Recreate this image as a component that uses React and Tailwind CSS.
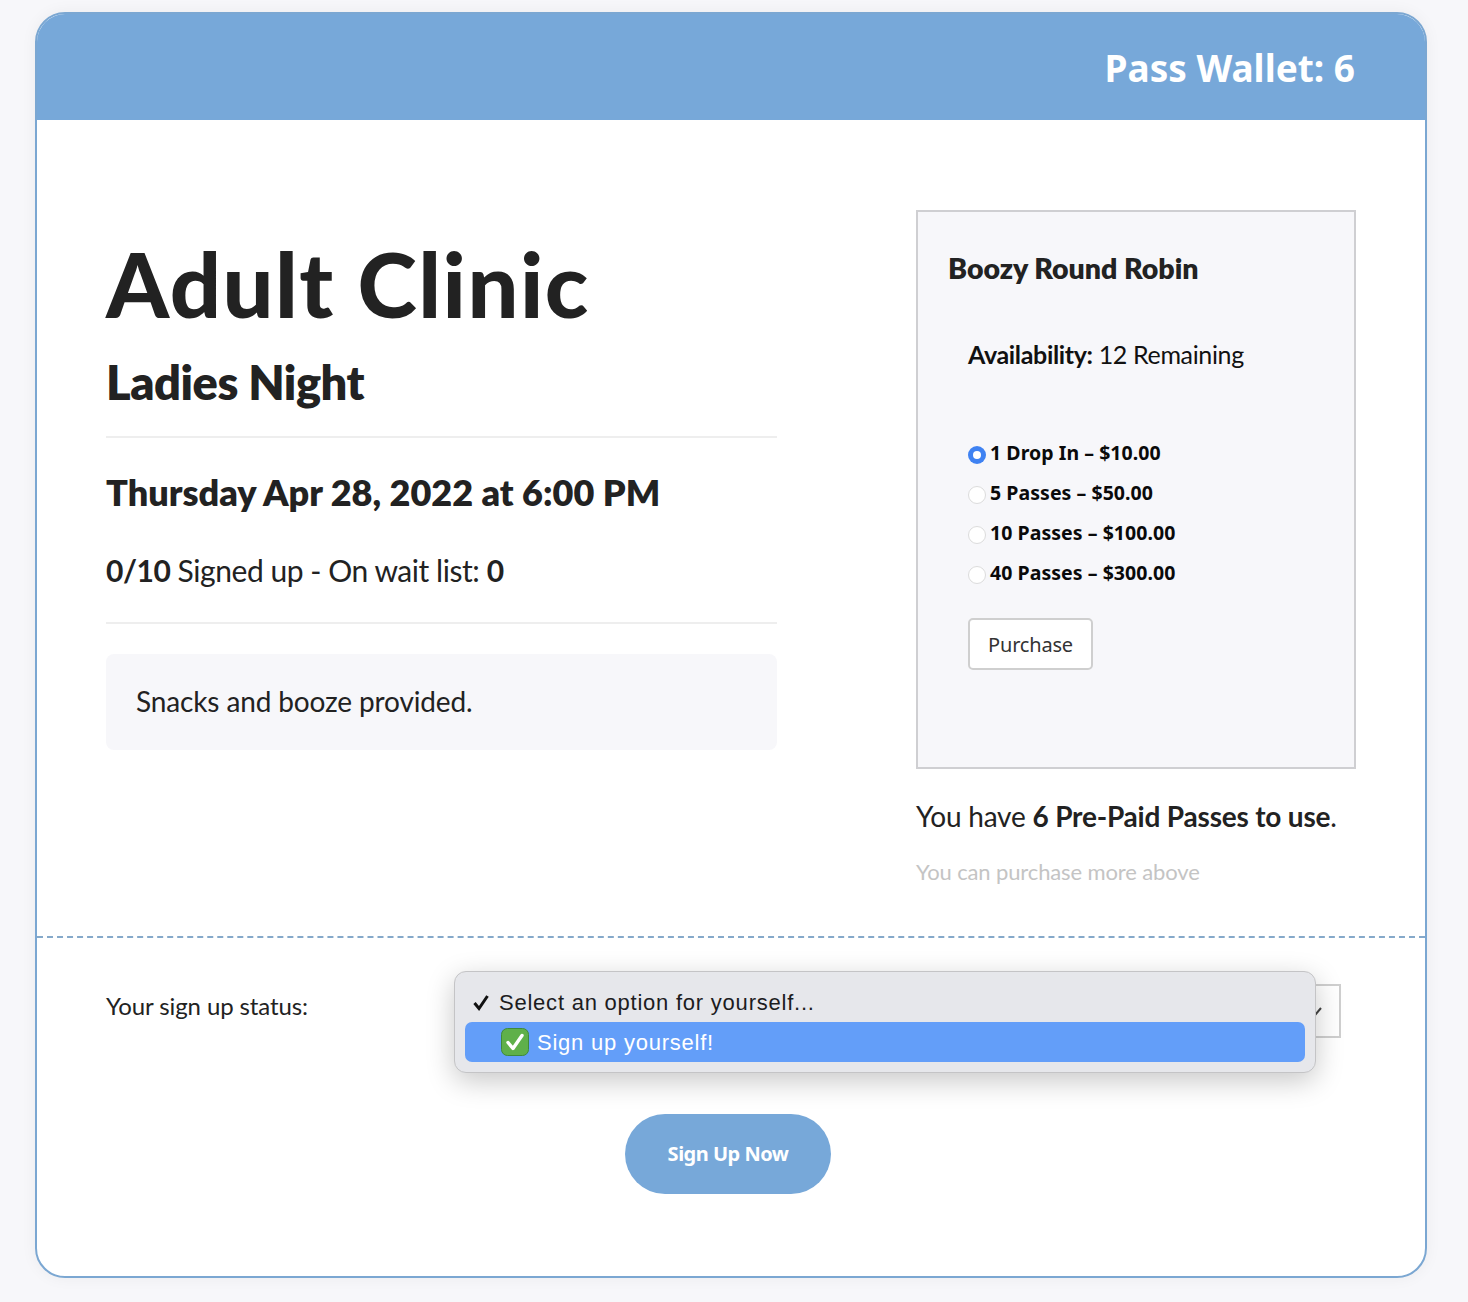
const passes = [
  { label: "1 Drop In – $10.00", checked: true },
  { label: "5 Passes – $50.00" },
  { label: "10 Passes – $100.00" },
  { label: "40 Passes – $300.00" },
];

const lato = "font-['Lato',sans-serif]";
const source = "font-['Noto_Sans',sans-serif]";

function CheckEmoji() {
  return (
    <svg width="28" height="28" viewBox="0 0 28 28" className="shrink-0">
      <rect x="0.5" y="0.5" width="27" height="27" rx="6" fill="#5fb04a" stroke="#3f8a3a" />
      <path d="M7 14.5l5 6 9-13" fill="none" stroke="#fff" strokeWidth="3.4" strokeLinecap="round" strokeLinejoin="round" />
    </svg>
  );
}

function PassOption({ label, checked }) {
  return (
    <label className="flex items-center h-10">
      {checked ? (
        <span className="w-[18px] h-[18px] rounded-full bg-[#3f82f2] flex items-center justify-center mt-[4px] shrink-0">
          <span className="w-[8px] h-[8px] rounded-full bg-white" />
        </span>
      ) : (
        <span className="w-[18px] h-[18px] rounded-full bg-white border border-[#dcdcdc] mt-[4px] shrink-0" />
      )}
      <span className={`${source} ml-[4px] text-[19.5px] font-bold text-[#0a0a0a] tracking-[0.05px]`}>{label}</span>
    </label>
  );
}

export default function App() {
  return (
    <div className="min-h-[1302px] bg-[#f7f7fa] pt-3 pl-[35px]">
      <div className="h-[1266px] w-[1392px] rounded-[30px] border-2 border-[#7ba7d2] bg-white overflow-hidden shadow-[0_0_16px_rgba(0,0,0,0.05)] text-[#222]">
        <div className="-mx-[2px] -mt-[2px] h-[108px] bg-[#77a8d9] flex items-center justify-end pr-[72px] pt-1">
          <span className={`${source} text-[37px] font-bold text-white`}>Pass Wallet: 6</span>
        </div>

        <div className="flex justify-between pl-[69px] pr-[69px] h-[818px] pt-[90px] border-b-2 border-dashed border-[#85a9ca]">
          <div className={`${lato} w-[671px]`}>
            <h1 className="text-[90px] leading-[108px] font-black mt-[19px] tracking-[1.45px]">Adult Clinic</h1>
            <h2 className="text-[47px] leading-[56px] font-extrabold mt-[17px] tracking-[-0.5px]">Ladies Night</h2>
            <div className="border-t-2 border-[#eeeeee] mt-[26px]" />
            <h3 className="text-[36px] leading-[44px] font-extrabold mt-[32px] tracking-[0.03px]">Thursday Apr 28, 2022 at 6:00 PM</h3>
            <p className="text-[30px] leading-[36px] mt-[38px] tracking-[-0.45px]">
              <b>0/10</b> Signed up - On wait list: <b>0</b>
            </p>
            <div className="border-t-2 border-[#eeeeee] mt-[34px]" />
            <div className="mt-[30px] h-[96px] rounded-lg bg-[#f7f7fa] px-[30px] pb-[2px] flex items-center text-[28px] tracking-[-0.13px]">
              Snacks and booze provided.
            </div>
          </div>

          <div className="w-[440px]">
            <div className="h-[559px] border-2 border-[#cfcfd2] bg-[#f7f7fa] pl-[30px]">
              <h4 className={`${lato} text-[28.500px] leading-[34px] font-extrabold mt-[39px]`}>Boozy Round Robin</h4>
              <p className={`${lato} text-[25px] leading-[30px] ml-[20px] mt-[54px] text-[#111] tracking-[-0.35px]`}>
                <b>Availability:</b> 12 Remaining
              </p>
              <div className="ml-[20px] mt-[64px]">
                {passes.map((p) => (
                  <PassOption key={p.label} label={p.label} checked={p.checked} />
                ))}
              </div>
              <button
                type="button"
                className={`${source} ml-[20px] mt-[25px] w-[125px] h-[52px] rounded-[5px] border-2 border-[#cfcfcf] bg-white text-[20px] text-[#333] tracking-[-0.2px] pt-[2px]`}
              >
                Purchase
              </button>
            </div>
            <p className={`${lato} text-[28px] leading-[34px] mt-[30px] tracking-[-0.2px]`}>
              You have <b>6 Pre-Paid Passes to use</b>.
            </p>
            <p className={`${lato} text-[22px] leading-[28px] mt-[25px] text-[#c4c4c4] tracking-[-0.13px]`}>You can purchase more above</p>
          </div>
        </div>

        <div className="flex items-center pl-[69px] mt-[46px] h-[54px]">
          <span className={`${lato} text-[24px] w-[348px] shrink-0 mb-[10px] tracking-[-0.1px]`}>Your sign up status:</span>
          <div className="relative w-[887px] h-[54px] border-2 border-[#cfcfcf] bg-white">
            <svg width="16" height="16" viewBox="0 0 16 16" className="absolute right-[15px] top-[17px]">
              <path d="M3 5l5 6 5-6" fill="none" stroke="#444" strokeWidth="2" />
            </svg>
            <div className="absolute -left-[2px] -top-[15px] w-[862px] h-[102px] rounded-[12px] border border-[#c4c4c6] bg-[#e6e7eb] px-[10px] pt-[10px] shadow-[0_8px_28px_rgba(0,0,0,0.22)] font-['Liberation_Sans',sans-serif] text-[22px] tracking-[0.77px]">
              <div className="h-[40px] flex items-center text-[#1c1c1e]">
                <svg width="18" height="18" viewBox="0 0 18 18" className="ml-[7px] mr-[9px] shrink-0">
                  <path d="M2.5 10l4.5 5.5L15.500 3" fill="none" stroke="#111" strokeWidth="3" />
                </svg>
                Select an option for yourself...
              </div>
              <div className="h-[40px] rounded-[7px] bg-[#639ef9] flex items-center text-white pl-[36px]">
                <CheckEmoji />
                <span className="ml-[8px]">Sign up yourself!</span>
              </div>
            </div>
          </div>
        </div>

        <div className="flex justify-center mt-[76px] pr-[6px]">
          <button
            type="button"
            className={`${source} w-[206px] h-[80px] rounded-full bg-[#77a8d9] text-white text-[20px] font-bold tracking-[-0.5px]`}
          >
            Sign Up Now
          </button>
        </div>
      </div>
    </div>
  );
}
